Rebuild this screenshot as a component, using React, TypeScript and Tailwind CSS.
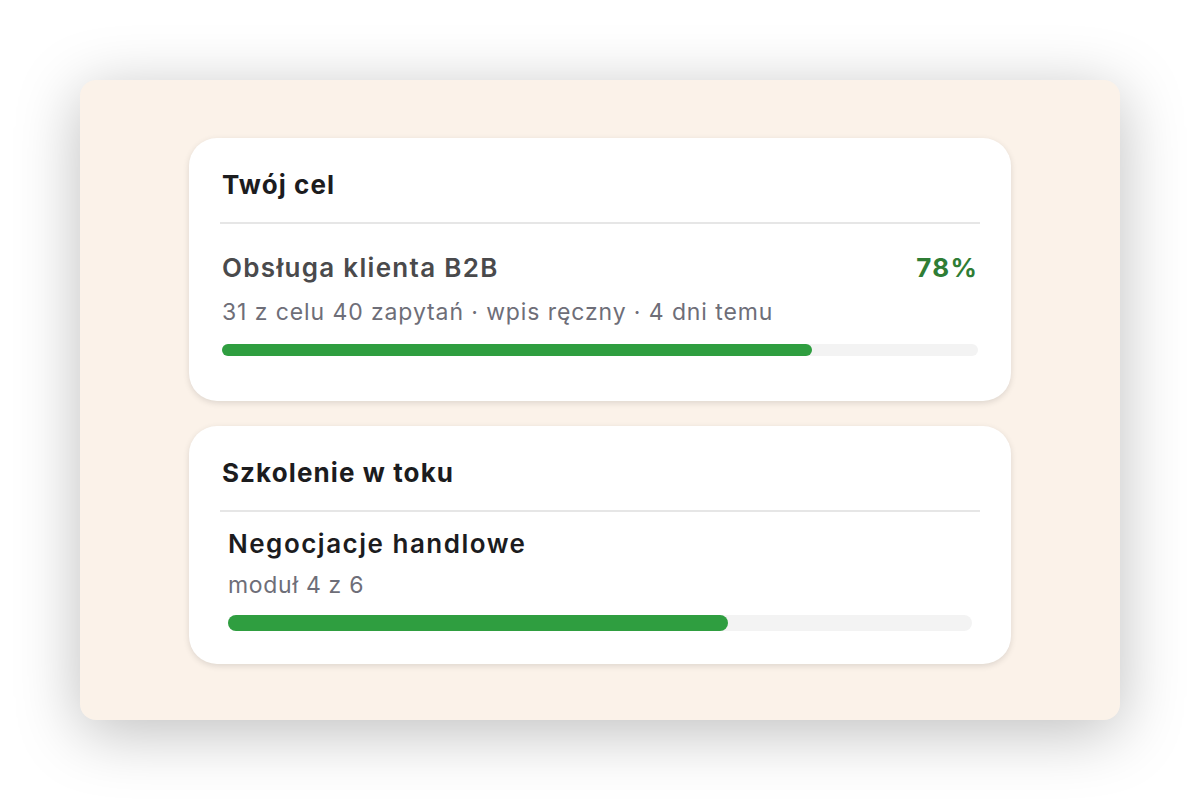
import React from "react";

type Goal = {
  name: string;
  meta: string;
  percent: number;
};

type Course = {
  name: string;
  module: number;
  total: number;
};

const goal: Goal = {
  name: "Obsługa klienta B2B",
  meta: "31 z celu 40 zapytań · wpis ręczny · 4 dni temu",
  percent: 78,
};

const course: Course = {
  name: "Negocjacje handlowe",
  module: 4,
  total: 6,
};

function Card({ title, children }: { title: string; children: React.ReactNode }) {
  return (
    <section className="w-[822px] rounded-[28px] bg-white px-[31px] shadow-[0_2px_6px_rgba(0,0,0,0.12)]">
      <h2 className="pl-[2px] pt-[29px] pb-[19px] text-[26px] font-bold leading-[36px] tracking-[1.1px] text-[#1c1c1e]">
        {title}
      </h2>
      <div className="h-[2px] bg-[#e6e6e6]" />
      {children}
    </section>
  );
}

export default function App() {
  const courseProgress = Math.round((course.module / course.total) * 1000) / 10 + 0.5;
  return (
    <div
      className="flex h-[800px] w-[1200px] items-center justify-center bg-white"
      style={{ fontFamily: "Inter, 'Noto Sans', sans-serif" }}
    >
      <div className="flex h-[640px] w-[1040px] flex-col items-center gap-[25px] rounded-[16px] bg-[#fbf2e9] pt-[58px] shadow-[0_12px_64px_rgba(0,0,0,0.26)]">
        <Card title="Twój cel">
          <div className="px-[2px] pb-[45px] pt-[26px]">
            <div className="flex items-center justify-between">
              <span className="text-[26px] font-semibold leading-[36px] tracking-[1.3px] text-[#4a4a4c]">
                {goal.name}
              </span>
              <span className="text-[26px] font-bold leading-[36px] tracking-[1.2px] text-[#2f7d35]">
                {goal.percent}%
              </span>
            </div>
            <p className="mt-[12px] text-[23px] leading-[28px] tracking-[0.9px] text-[#6e6e78]">{goal.meta}</p>
            <div className="mt-[18px] h-[12px] w-full rounded-full bg-[#f3f3f3]">
              <div className="h-full rounded-full bg-[#2f9e40]" style={{ width: `${goal.percent}%` }} />
            </div>
          </div>
        </Card>
        <Card title="Szkolenie w toku">
          <div className="px-[8px] pb-[33px] pt-[14px]">
            <p className="text-[26px] font-semibold leading-[36px] tracking-[1.5px] text-[#1c1c1e]">{course.name}</p>
            <p className="mt-[9px] text-[23px] leading-[28px] tracking-[0.7px] text-[#6e6e78]">
              moduł {course.module} z {course.total}
            </p>
            <div className="mt-[16px] h-[16px] w-full rounded-full bg-[#f3f3f3]">
              <div className="h-full rounded-full bg-[#2f9e40]" style={{ width: `${courseProgress}%` }} />
            </div>
          </div>
        </Card>
      </div>
    </div>
  );
}
